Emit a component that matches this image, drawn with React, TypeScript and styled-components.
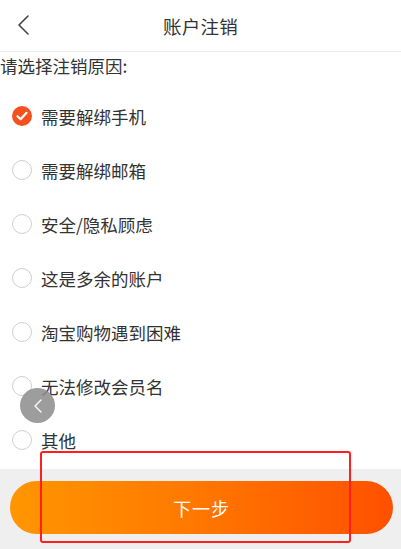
import * as React from 'react';
import styled, { createGlobalStyle } from 'styled-components';

const GlobalStyle = createGlobalStyle`
  html, body {
    margin: 0;
    padding: 0;
    background: #fff;
  }
  body {
    font-family: "Noto Sans CJK SC", "Noto Sans", sans-serif;
    color: #333;
  }
`;

const reasons = [
  '需要解绑手机',
  '需要解绑邮箱',
  '安全/隐私顾虑',
  '这是多余的账户',
  '淘宝购物遇到困难',
  '无法修改会员名',
  '其他',
];

const Page = styled.div`
  position: relative;
  display: flex;
  flex-direction: column;
  width: 401px;
  height: 549px;
  overflow: hidden;
  background: #fff;
`;

const Header = styled.div`
  display: flex;
  align-items: center;
  justify-content: center;
  position: relative;
  height: 52px;
  flex-shrink: 0;
  border-bottom: 1px solid #ececec;
  box-sizing: border-box;
`;

const BackButton = styled.svg`
  position: absolute;
  left: 16px;
  top: 14px;
  width: 16px;
  height: 22px;
  stroke: #444;
  fill: none;
`;

const Title = styled.div`
  font-size: 18.5px;
  color: #333;
  letter-spacing: 0.3px;
`;

const Prompt = styled.div`
  font-size: 17.5px;
  line-height: 26px;
  height: 26px;
  margin-top: 1px;
  color: #333;
`;

const List = styled.div`
  display: flex;
  flex-direction: column;
  margin-top: 10px;
  flex: 1;
`;

const Row = styled.div`
  display: flex;
  align-items: center;
  height: 54px;
  padding-left: 12px;
  gap: 9px;
  font-size: 17.5px;
  color: #333;
`;

const Radio = styled.span<{ $checked?: boolean }>`
  display: flex;
  align-items: center;
  justify-content: center;
  width: 20px;
  height: 20px;
  border-radius: 50%;
  box-sizing: border-box;
  border: ${p => (p.$checked ? 'none' : '1px solid #cfcfcf')};
  background: ${p => (p.$checked ? '#f4511e' : '#fff')};
  flex-shrink: 0;
`;

const Footer = styled.div`
  height: 80px;
  flex-shrink: 0;
  background: #efefef;
  padding: 12px 8px 0 10px;
  box-sizing: border-box;
`;

const NextButton = styled.div`
  display: flex;
  align-items: center;
  justify-content: center;
  height: 53px;
  border-radius: 27px;
  background: linear-gradient(90deg, #ff9600 0%, #ff7a00 45%, #ff5000 100%);
  color: #fff;
  font-size: 18px;
  letter-spacing: 1px;
`;

const FloatBack = styled.div`
  position: absolute;
  left: 20px;
  top: 388px;
  width: 35px;
  height: 35px;
  border-radius: 50%;
  background: rgba(140, 140, 140, 0.85);
  display: flex;
  align-items: center;
  justify-content: center;
`;

const Highlight = styled.div`
  position: absolute;
  left: 40px;
  top: 451px;
  width: 311px;
  height: 92px;
  box-sizing: border-box;
  border: 2px solid #ff1f1f;
  border-radius: 3px;
  pointer-events: none;
`;

const Check = () => (
  <svg width="12" height="10" viewBox="0 0 12 10" fill="none">
    <path d="M1.5 5.2 L4.6 8.2 L10.5 1.8" stroke="#fff" strokeWidth="2.2" strokeLinecap="round" strokeLinejoin="round" />
  </svg>
);

export default function App() {
  const [selected, setSelected] = React.useState(0);

  return (
    <Page>
      <GlobalStyle />
      <Header>
        <BackButton viewBox="0 0 16 22">
          <path d="M12 2 L3 11 L12 20" strokeWidth="1.6" strokeLinecap="round" strokeLinejoin="round" />
        </BackButton>
        <Title>账户注销</Title>
      </Header>
      <Prompt>请选择注销原因:</Prompt>
      <List>
        {reasons.map((reason, index) => (
          <Row key={index} onClick={() => setSelected(index)}>
            <Radio $checked={selected === index}>{selected === index && <Check />}</Radio>
            {reason}
          </Row>
        ))}
      </List>
      <Footer>
        <NextButton>下一步</NextButton>
      </Footer>
      <FloatBack>
        <svg width="10" height="16" viewBox="0 0 10 16" fill="none">
          <path d="M8 2 L2 8 L8 14" stroke="#fff" strokeWidth="1.3" strokeLinecap="round" strokeLinejoin="round" />
        </svg>
      </FloatBack>
      <Highlight />
    </Page>
  );
}
